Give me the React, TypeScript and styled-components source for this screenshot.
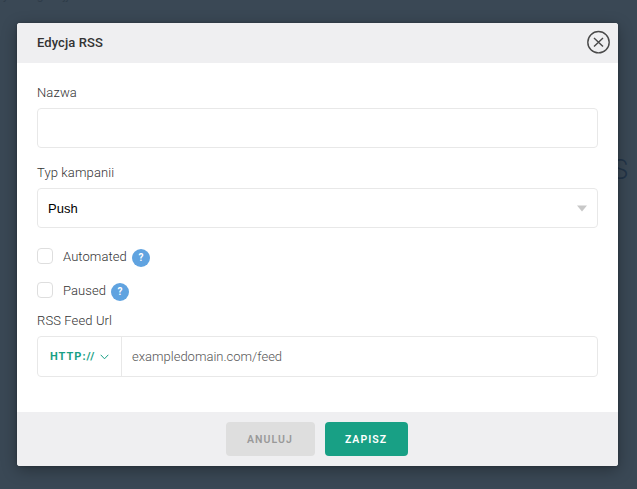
import React from "react";
import styled, { createGlobalStyle, css } from "styled-components";

const GlobalStyle = createGlobalStyle`
  * { box-sizing: border-box; }
  html, body { margin: 0; height: 100%; overflow: hidden; }
  body { font-family: Roboto, "Liberation Sans", sans-serif; font-size: 13px; }
`;

const Backdrop = styled.main`
  position: relative;
  width: 637px;
  height: 489px;
  padding: 23px 19px 23px 17px;
  background: #3a4855;
  overflow: hidden;
`;

const PageTitle = styled.span`
  position: absolute;
  right: 9px;
  top: 154px;
  font-size: 27px;
  font-weight: 300;
  line-height: 32px;
  color: #223448;
`;

const PageCaption = styled.span`
  position: absolute;
  left: 3px;
  top: -12px;
  font-size: 12px;
  line-height: 14px;
  color: #2f3c49;
`;

const Dialog = styled.section`
  position: relative;
  display: flex;
  flex-direction: column;
  width: 601px;
  height: 443px;
  border-radius: 3px;
  background: #fff;
  box-shadow: 0 4px 16px rgba(0, 0, 0, 0.32), 0 0 3px rgba(0, 0, 0, 0.25);
  overflow: hidden;
`;

const Header = styled.header`
  display: flex;
  align-items: center;
  justify-content: space-between;
  height: 40px;
  padding: 0 7px 0 20px;
  background: #efeff1;
`;

const Title = styled.h1`
  margin: 0;
  font-size: 13px;
  font-weight: 500;
  line-height: 20px;
  letter-spacing: 0.08px;
  color: #333;
`;

const CloseButton = styled.button`
  display: flex;
  width: 25px;
  height: 25px;
  margin-bottom: 1px;
  padding: 0;
  border: 0;
  background: none;
`;

const Form = styled.form`
  flex: 1;
  padding: 19px 20px 0;
`;

const Label = styled.label`
  display: block;
  height: 26px;
  font-weight: 300;
  line-height: 21px;
  letter-spacing: 0.12px;
  color: #333;
`;

const boxed = css`
  width: 561px;
  height: 40px;
  border: 1px solid #e8e8e8;
  border-radius: 4px;
  background: #fff;
`;

const TextInput = styled.input`
  ${boxed}
  display: block;
  margin-bottom: 14px;
  padding: 0 10px;
  font: inherit;
  outline: none;
`;

const Select = styled.div`
  ${boxed}
  display: flex;
  align-items: center;
  justify-content: space-between;
  margin-bottom: 18px;
  padding: 0 10px;
  font-family: "Liberation Sans", Arial, sans-serif;
  color: #000;
`;

const CheckRow = styled.div`
  display: flex;
  height: 34px;
`;

const CheckBox = styled.span`
  width: 16px;
  height: 16px;
  margin: 2px 10px 0 0;
  border: 1px solid #dedede;
  border-radius: 4px;
`;

const CheckLabel = styled.span`
  margin-right: 5px;
  font-weight: 300;
  line-height: 21px;
  letter-spacing: 0.08px;
  color: #333;
`;

const Help = styled.span`
  width: 18px;
  height: 18px;
  margin-top: 3px;
  border-radius: 50%;
  background: #60a3e0;
  color: #fff;
  font-size: 10px;
  font-weight: 700;
  line-height: 18px;
  text-align: center;
`;

const UrlLabel = styled(Label)`
  margin-top: -4px;
`;

const UrlField = styled.div`
  ${boxed}
  display: flex;
  height: 41px;
`;

const Protocol = styled.button`
  display: flex;
  align-items: center;
  gap: 5px;
  width: 84px;
  padding: 0 0 0 12px;
  border: 0;
  border-right: 1px solid #e8e8e8;
  background: none;
  font: 700 11px Roboto, sans-serif;
  letter-spacing: 1px;
  color: #18a085;
`;

const UrlInput = styled.input`
  flex: 1;
  min-width: 0;
  padding: 0 10px;
  border: 0;
  background: none;
  font: 300 13px Roboto, sans-serif;
  outline: none;
  &::placeholder { color: #555; opacity: 1; }
`;

const Footer = styled.footer`
  display: flex;
  align-items: center;
  justify-content: center;
  gap: 10px;
  height: 54px;
  padding-right: 2px;
  background: #efeff1;
`;

const Button = styled.button<{ $primary?: boolean }>`
  width: ${(p) => (p.$primary ? 83 : 89)}px;
  height: 34px;
  padding: 0;
  border: 0;
  border-radius: 4px;
  background: ${(p) => (p.$primary ? "#18a085" : "#dedede")};
  color: ${(p) => (p.$primary ? "#fff" : "#999")};
  font: 600 10.5px Roboto, sans-serif;
  letter-spacing: 1.05px;
`;

const options = ["Automated", "Paused"];

export default function App() {
  return (
    <Backdrop>
      <GlobalStyle />
      <PageCaption>yczenig racjji</PageCaption>
      <PageTitle>S</PageTitle>
      <Dialog role="dialog">
        <Header>
          <Title>Edycja RSS</Title>
          <CloseButton aria-label="Zamknij">
            <svg width="25" height="25" viewBox="0 0 25 25" fill="none" stroke="#4a4a4a" strokeWidth="1.4">
              <circle cx="12.5" cy="12.2" r="10.7" />
              <path d="M8 7.9 17 16.5M17 7.9 8 16.5" />
            </svg>
          </CloseButton>
        </Header>
        <Form>
          <Label htmlFor="name">Nazwa</Label>
          <TextInput id="name" />
          <Label>Typ kampanii</Label>
          <Select>
            Push
            <svg width="10" height="7" viewBox="0 0 10 7"><path d="M0 .5h10L5 6.5z" fill="#c8c8c8" /></svg>
          </Select>
          {options.map((name) => (
            <CheckRow key={name}>
              <CheckBox />
              <CheckLabel>{name}</CheckLabel>
              <Help>?</Help>
            </CheckRow>
          ))}
          <UrlLabel htmlFor="url">RSS Feed Url</UrlLabel>
          <UrlField>
            <Protocol type="button">
              HTTP://
              <svg width="9" height="6" viewBox="0 0 9 6" fill="none" stroke="#18a085">
                <path d="M.7 .8 4.5 4.8 8.3 .8" />
              </svg>
            </Protocol>
            <UrlInput id="url" placeholder="exampledomain.com/feed" />
          </UrlField>
        </Form>
        <Footer>
          <Button>ANULUJ</Button>
          <Button $primary>ZAPISZ</Button>
        </Footer>
      </Dialog>
    </Backdrop>
  );
}
